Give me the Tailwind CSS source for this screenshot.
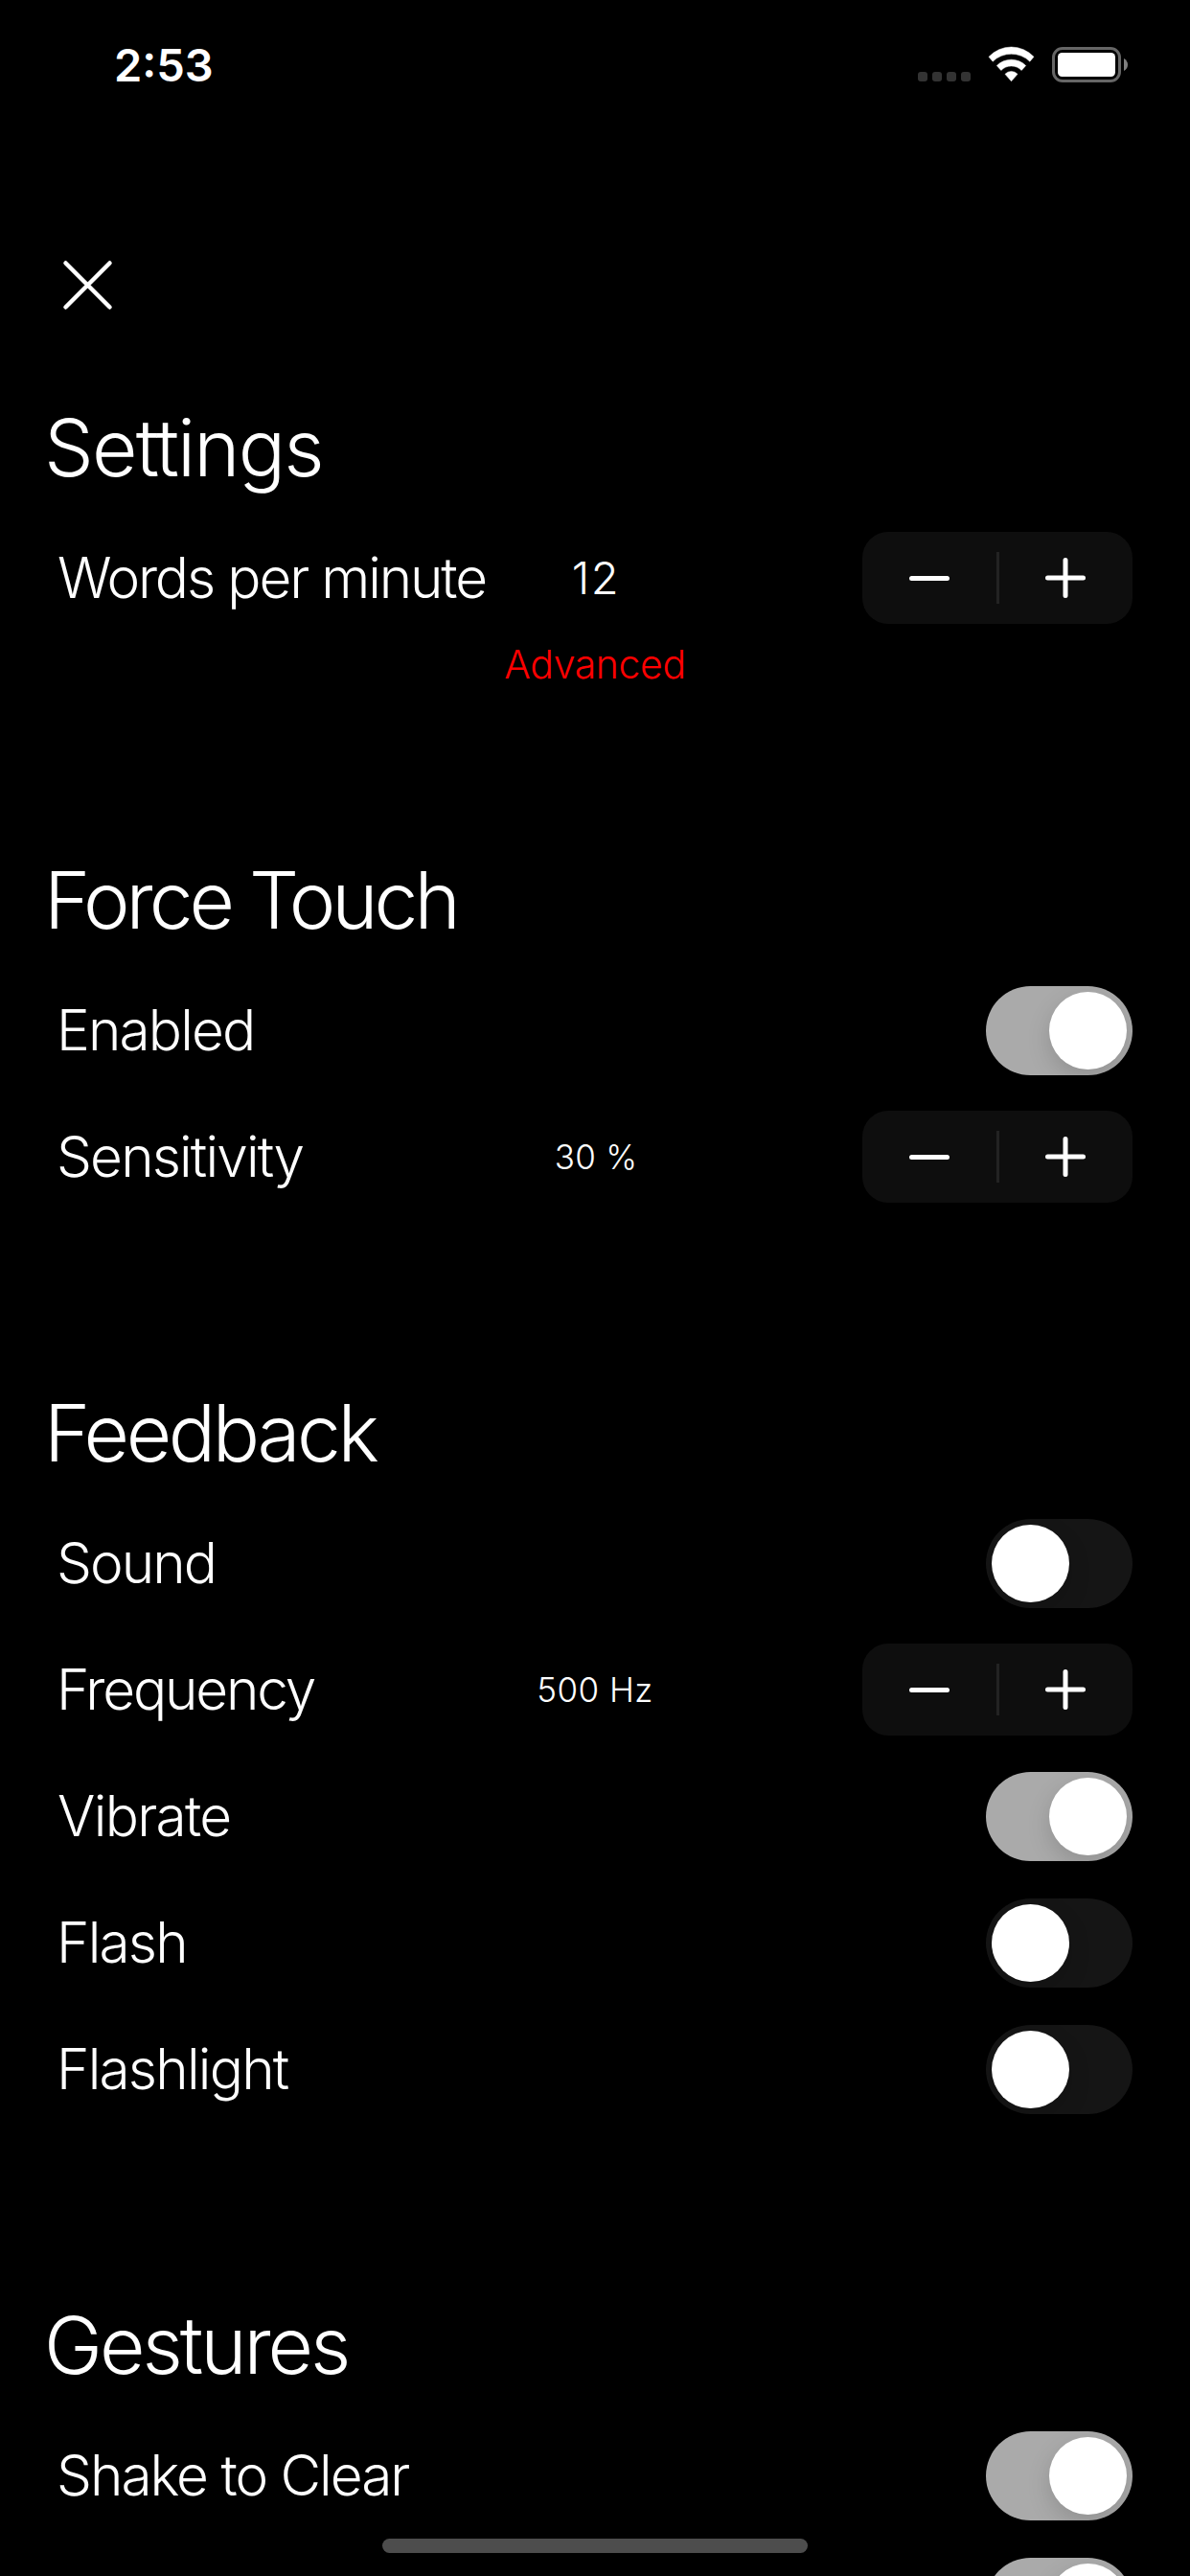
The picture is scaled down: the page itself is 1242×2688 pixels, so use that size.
<!DOCTYPE html>
<html lang="en">
<head>
<meta charset="utf-8">
<title>Settings</title>
<script src="https://cdn.jsdelivr.net/npm/@tailwindcss/browser@4"></script>
</head>
<body class="bg-black">
<svg class="hidden">
  <symbol id="minus" viewBox="0 0 44 44"><path d="M3.5 22.5H40.5" stroke="#fff" stroke-width="5" stroke-linecap="round"/></symbol>
  <symbol id="plus" viewBox="0 0 44 44"><path d="M3.5 22H40.5M22 3.5V40.5" stroke="#fff" stroke-width="5" stroke-linecap="round"/></symbol>
</svg>
<div class="relative flex h-[2688px] w-[1242px] flex-col overflow-hidden bg-black font-[Inter,sans-serif] font-light whitespace-nowrap text-white">

  <!-- Status bar -->
  <header class="flex h-[135px] shrink-0 items-start justify-between pt-[48px] pr-[64px] pl-[119px]">
    <span class="text-[47px] leading-[39px] font-semibold">2:53</span>
    <div class="flex gap-[18px]">
      <svg class="h-[38px] w-[55px]" viewBox="0 0 55 38" fill="#333">
        <rect x="0" y="27" width="10" height="10" rx="3"/><rect x="15" y="27" width="10" height="10" rx="3"/><rect x="30" y="27" width="10" height="10" rx="3"/><rect x="45" y="27" width="10" height="10" rx="3"/>
      </svg>
      <svg class="h-[38px] w-[49px]" viewBox="273 54 147 114" fill="#fff" stroke="#fff" stroke-width="1.5" stroke-linejoin="round">
        <path d="M276 88A96 96 0 0 1 417 88L404.500 102.500A83.400 83.400 0 0 0 288.500 102.500Z"/>
        <path d="M301 115.500A64 64 0 0 1 392 115.500L378.500 130.500A44 44 0 0 0 314.500 130.500Z"/>
        <path d="M327 142A26 26 0 0 1 366 142L346.500 164.500Z"/>
      </svg>
      <svg class="h-[38px] w-[80px]" viewBox="0 0 80 38">
        <rect x="1.500" y="2.500" width="69" height="34" rx="9.500" fill="none" stroke="#666" stroke-width="3"/>
        <rect x="6" y="7" width="60" height="25" rx="4.500" fill="#fff"/>
        <path d="M75 13Q79 15.500 79 19.500T75 26Z" fill="#808080"/>
      </svg>
    </div>
  </header>

  <!-- Close -->
  <nav class="flex h-[262px] shrink-0 items-start pt-[135px] pl-[64px]">
    <svg class="size-[55px]" viewBox="0 0 55 55"><path d="M4.500 4.500L50.500 50.500M50.500 4.500L4.500 50.500" stroke="#fff" stroke-width="4.500" stroke-linecap="round"/></svg>
  </nav>

  <main class="flex flex-col gap-[152px]">
    <section>
      <h2 class="-mb-[2px] pl-[46px] text-[82px] leading-[142px] tracking-[-1.84px]">Settings</h2>
      <div class="grid h-[132px] grid-cols-[1fr_auto_1fr] items-center px-[60px]">
        <span class="text-[58.5px] tracking-[-2.14px]">Words per minute</span>
        <span class="pl-[2px] text-[47px] tracking-[1.7px]">12</span>
        <div class="flex h-[96px] w-[282px] items-center justify-self-end rounded-[27px] bg-[#0e0e0e]">
          <span class="flex flex-1 justify-center"><svg class="size-[44px]"><use href="#minus"/></svg></span><i class="h-[54px] w-[3px] bg-[#232323]"></i><span class="flex flex-1 justify-center"><svg class="size-[44px]"><use href="#plus"/></svg></span>
        </div>
      </div>
      <p class="text-center text-[41px] leading-[48px] tracking-[-0.41px] text-[#f00]">Advanced</p>
    </section>

    <section>
      <h2 class="-mb-[2px] pl-[46px] text-[82px] leading-[142px] tracking-[-4.02px]">Force Touch</h2>
      <div class="flex h-[132px] items-center justify-between pr-[60px] pl-[59px]">
        <span class="text-[58.5px] tracking-[-1.84px]">Enabled</span>
        <div class="mt-px flex h-[93px] w-[153px] justify-end overflow-hidden rounded-full bg-[#aaa] p-[6px]"><i class="size-[81px] rounded-full bg-white shadow-[0_9px_24px_rgba(0,0,0,0.15)]"></i></div>
      </div>
      <div class="grid h-[132px] grid-cols-[1fr_auto_1fr] items-center px-[60px]">
        <span class="-ml-px text-[58.5px] tracking-[-1.86px]">Sensitivity</span>
        <span class="pl-[2px] text-[35px] tracking-[0.3px]">30 %</span>
        <div class="flex h-[96px] w-[282px] items-center justify-self-end rounded-[27px] bg-[#0e0e0e]">
          <span class="flex flex-1 justify-center"><svg class="size-[44px]"><use href="#minus"/></svg></span><i class="h-[54px] w-[3px] bg-[#232323]"></i><span class="flex flex-1 justify-center"><svg class="size-[44px]"><use href="#plus"/></svg></span>
        </div>
      </div>
    </section>

    <section>
      <h2 class="-mb-[2px] pl-[46px] text-[82px] leading-[142px] tracking-[-3.43px]">Feedback</h2>
      <div class="flex h-[132px] items-center justify-between pr-[60px] pl-[59px]">
        <span class="text-[58.5px] tracking-[-1.95px]">Sound</span>
        <div class="mt-px flex h-[93px] w-[153px] overflow-hidden rounded-full bg-[#151515] p-[6px]"><i class="size-[81px] rounded-full bg-white shadow-[0_9px_24px_rgba(0,0,0,0.15)]"></i></div>
      </div>
      <div class="grid h-[132px] grid-cols-[1fr_auto_1fr] items-center px-[60px]">
        <span class="-ml-px text-[58.5px] tracking-[-2.15px]">Frequency</span>
        <span class="text-[35px] tracking-[0.45px]">500 Hz</span>
        <div class="flex h-[96px] w-[282px] items-center justify-self-end rounded-[27px] bg-[#0e0e0e]">
          <span class="flex flex-1 justify-center"><svg class="size-[44px]"><use href="#minus"/></svg></span><i class="h-[54px] w-[3px] bg-[#232323]"></i><span class="flex flex-1 justify-center"><svg class="size-[44px]"><use href="#plus"/></svg></span>
        </div>
      </div>
      <div class="flex h-[132px] items-center justify-between px-[60px]">
        <span class="text-[58.5px] tracking-[-1.68px]">Vibrate</span>
        <div class="mt-px flex h-[93px] w-[153px] justify-end overflow-hidden rounded-full bg-[#aaa] p-[6px]"><i class="size-[81px] rounded-full bg-white shadow-[0_9px_24px_rgba(0,0,0,0.15)]"></i></div>
      </div>
      <div class="flex h-[132px] items-center justify-between pr-[60px] pl-[59px]">
        <span class="text-[58.5px] tracking-[-1.78px]">Flash</span>
        <div class="mt-px flex h-[93px] w-[153px] overflow-hidden rounded-full bg-[#151515] p-[6px]"><i class="size-[81px] rounded-full bg-white shadow-[0_9px_24px_rgba(0,0,0,0.15)]"></i></div>
      </div>
      <div class="flex h-[132px] items-center justify-between pr-[60px] pl-[59px]">
        <span class="text-[58.5px] tracking-[-1.78px]">Flashlight</span>
        <div class="mt-px flex h-[93px] w-[153px] overflow-hidden rounded-full bg-[#151515] p-[6px]"><i class="size-[81px] rounded-full bg-white shadow-[0_9px_24px_rgba(0,0,0,0.15)]"></i></div>
      </div>
    </section>

    <section>
      <h2 class="-mb-[2px] pl-[46px] text-[82px] leading-[142px] tracking-[-3.03px]">Gestures</h2>
      <div class="flex h-[132px] items-center justify-between pr-[60px] pl-[59px]">
        <span class="text-[58.5px] tracking-[-2.01px]">Shake to Clear</span>
        <div class="mt-px flex h-[93px] w-[153px] justify-end overflow-hidden rounded-full bg-[#aaa] p-[6px]"><i class="size-[81px] rounded-full bg-white shadow-[0_9px_24px_rgba(0,0,0,0.15)]"></i></div>
      </div>
      <div class="flex h-[132px] items-center justify-end pr-[60px]">
        <div class="mt-px flex h-[93px] w-[153px] justify-end overflow-hidden rounded-full bg-[#aaa] p-[6px]"><i class="size-[81px] rounded-full bg-white shadow-[0_9px_24px_rgba(0,0,0,0.15)]"></i></div>
      </div>
    </section>
  </main>

  <!-- Home indicator -->
  <div class="absolute bottom-[24px] left-[399px] h-[15px] w-[444px] rounded-full bg-[#4d4d4d]"></div>
</div>
</body>
</html>
